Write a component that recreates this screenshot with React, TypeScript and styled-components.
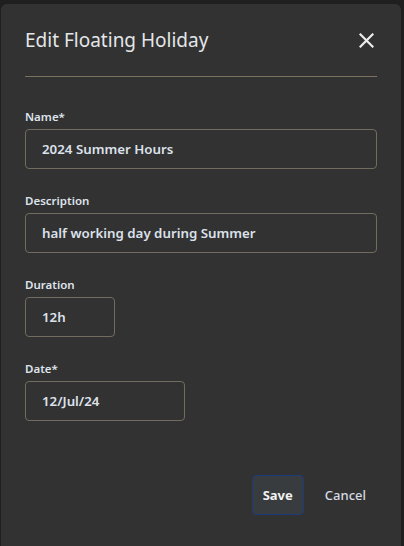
import * as React from 'react';
import styled, { createGlobalStyle } from 'styled-components';

const GlobalStyle = createGlobalStyle`
  html, body {
    margin: 0;
    padding: 0;
    background: #1f1f1f;
  }
  body {
    font-family: 'Noto Sans', 'Open Sans', sans-serif;
  }
`;

const Page = styled.div`
  width: 404px;
  height: 546px;
  overflow: hidden;
  padding: 4px 3px 0 1px;
  box-sizing: border-box;
`;

const Modal = styled.div`
  width: 400px;
  height: 560px;
  background: #313231;
  border-radius: 6px;
  padding: 0 24px;
  box-sizing: border-box;
  display: flex;
  flex-direction: column;
`;

const Header = styled.div`
  height: 72px;
  display: flex;
  align-items: center;
  justify-content: space-between;
  border-bottom: 1px solid #7b715f;
`;

const Title = styled.h2`
  margin: 0;
  font-size: 19px;
  font-weight: 400;
  color: #e4e6ea;
`;

const CloseButton = styled.button`
  background: none;
  border: none;
  padding: 0;
  margin-right: 3px;
  width: 16px;
  height: 16px;
  display: flex;
  align-items: center;
  justify-content: center;
  color: #ececec;
  cursor: pointer;
`;

const Form = styled.div`
  display: flex;
  flex-direction: column;
  gap: 23px;
  padding-top: 31px;
`;

const Field = styled.div`
  display: flex;
  flex-direction: column;
  gap: 4px;
`;

const Label = styled.label`
  font-size: 11.5px;
  line-height: 17px;
  font-weight: 600;
  color: #dfe3ec;
`;

const Input = styled.div<{ width?: number }>`
  width: ${(p) => (p.width ? `${p.width}px` : '100%')};
  height: 40px;
  box-sizing: border-box;
  border: 1px solid #726b60;
  border-radius: 4px;
  padding: 0 16px;
  display: flex;
  align-items: center;
  font-size: 13.3px;
  font-weight: 600;
  color: #dde1ec;
`;

const Footer = styled.div`
  display: flex;
  justify-content: flex-end;
  gap: 10px;
  margin-top: 54px;
`;

const Button = styled.button<{ primary?: boolean }>`
  height: 40px;
  box-sizing: border-box;
  border-radius: 4px;
  font-family: inherit;
  font-size: 13px;
  cursor: pointer;
  padding: 0 10px;
  background: ${(p) => (p.primary ? '#393c3e' : 'transparent')};
  border: 1px solid ${(p) => (p.primary ? '#1d3a7c' : 'transparent')};
  font-weight: ${(p) => (p.primary ? 700 : 500)};
  color: ${(p) => (p.primary ? '#f2f2f2' : '#d6dae3')};
`;

function CloseIcon() {
  return (
    <svg width="15" height="15" viewBox="0 0 15 15" fill="none">
      <path d="M1.5 1.5L13.5 13.5M13.5 1.5L1.5 13.5" stroke="currentColor" strokeWidth="2.2" strokeLinecap="square" />
    </svg>
  );
}

function App() {
  return (
    <Page>
      <GlobalStyle />
      <Modal>
        <Header>
          <Title>Edit Floating Holiday</Title>
          <CloseButton aria-label="Close">
            <CloseIcon />
          </CloseButton>
        </Header>
        <Form>
          <Field>
            <Label>Name*</Label>
            <Input>2024 Summer Hours</Input>
          </Field>
          <Field>
            <Label>Description</Label>
            <Input>half working day during Summer</Input>
          </Field>
          <Field>
            <Label>Duration</Label>
            <Input width={90}>12h</Input>
          </Field>
          <Field>
            <Label>Date*</Label>
            <Input width={160}>12/Jul/24</Input>
          </Field>
        </Form>
        <Footer>
          <Button primary>Save</Button>
          <Button>Cancel</Button>
        </Footer>
      </Modal>
    </Page>
  );
}

export default App;
